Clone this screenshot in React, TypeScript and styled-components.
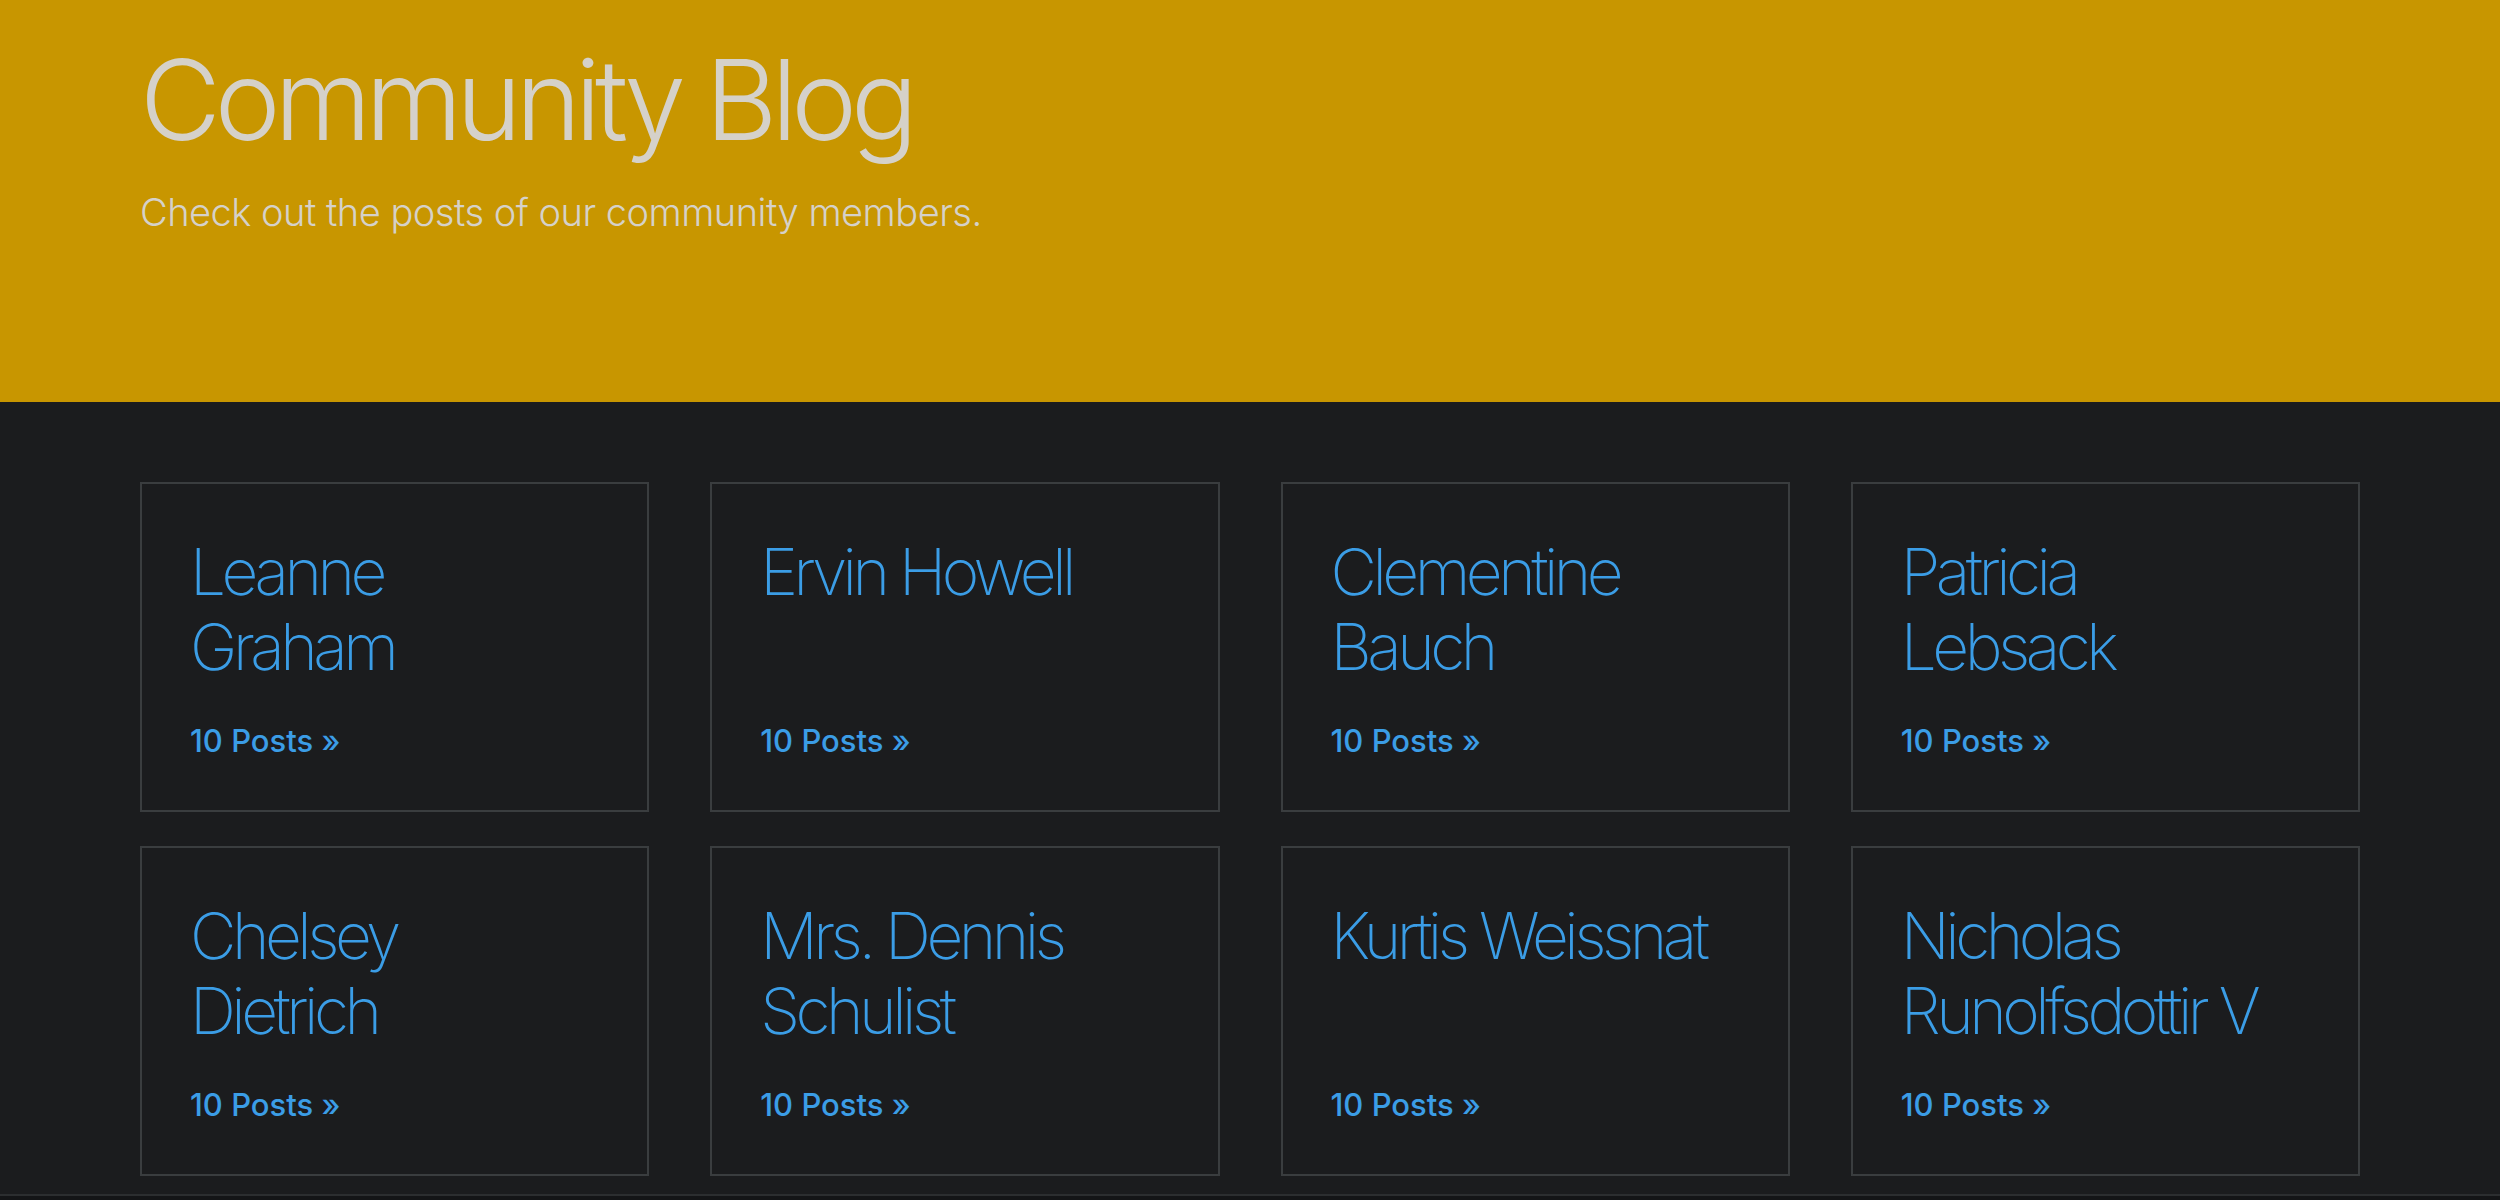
import React from "react";
import styled, { createGlobalStyle } from "styled-components";

const GlobalStyle = createGlobalStyle`
  html, body {
    margin: 0;
    padding: 0;
    background: #1b1c1e;
  }
  body {
    font-family: Inter, "Liberation Sans", sans-serif;
    -webkit-font-smoothing: antialiased;
  }
  * { box-sizing: border-box; }
`;

const Page = styled.div`
  min-height: 1200px;
  background: #1b1c1e;
  display: flex;
  flex-direction: column;
`;

const Hero = styled.header`
  height: 402px;
  background: #c89600;
  padding: 33px 140px 0;
`;

const HeroTitle = styled.h1`
  margin: 0;
  font-family: Inter, "Liberation Sans", sans-serif;
  font-weight: 300;
  font-size: 111px;
  line-height: 133px;
  letter-spacing: -6px;
  color: #d5d1c9;
`;

const HeroLead = styled.p`
  margin: 18px 0 0;
  font-family: Inter, "Liberation Sans", sans-serif;
  font-weight: 300;
  font-size: 38px;
  line-height: 57px;
  letter-spacing: -0.5px;
  color: #d5d1c9;
`;

const Main = styled.main`
  padding: 80px 140px 18px;
`;

const Grid = styled.div`
  display: grid;
  grid-template-columns: repeat(4, 1fr);
  column-gap: 61px;
  row-gap: 34px;
`;

const Card = styled.article`
  display: flex;
  flex-direction: column;
  border: 2px solid #3a3d3f;
  padding: 50px 64px 46px 48px;
`;

const Name = styled.h2`
  margin: 0 0 34px;
  font-family: Inter, "Liberation Sans", sans-serif;
  font-weight: 200;
  font-size: 64px;
  line-height: 75px;
  letter-spacing: -4.5px;
  color: #3b9de6;
`;

const PostsLink = styled.a`
  margin-top: auto;
  font-family: Inter, "Liberation Sans", sans-serif;
  font-weight: 500;
  font-size: 31px;
  line-height: 46px;
  color: #3b9de6;
  text-decoration: none;
`;

const Footer = styled.footer`
  flex: 1;
  border-top: 2px solid #2c2e30;
  background: #141517;
`;

const users = [
  "Leanne Graham",
  "Ervin Howell",
  "Clementine Bauch",
  "Patricia Lebsack",
  "Chelsey Dietrich",
  "Mrs. Dennis Schulist",
  "Kurtis Weissnat",
  "Nicholas Runolfsdottir V",
];

export default function App() {
  return (
    <Page>
      <GlobalStyle />
      <Hero>
        <HeroTitle>Community Blog</HeroTitle>
        <HeroLead>Check out the posts of our community members.</HeroLead>
      </Hero>
      <Main>
        <Grid>
          {users.map((u) => (
            <Card key={u}>
              <Name>{u}</Name>
              <PostsLink href="#">10 Posts »</PostsLink>
            </Card>
          ))}
        </Grid>
      </Main>
      <Footer />
    </Page>
  );
}
